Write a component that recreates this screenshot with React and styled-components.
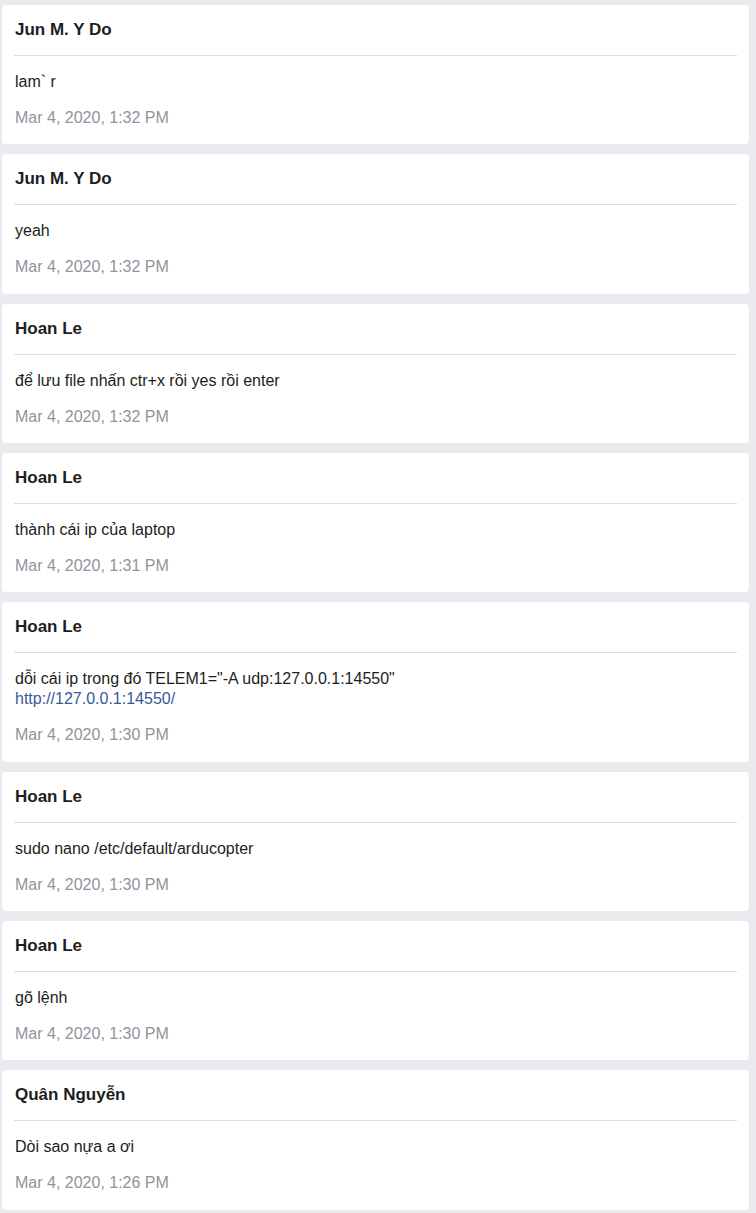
import React from 'react';
import styled, { createGlobalStyle } from 'styled-components';

const GlobalStyle = createGlobalStyle`
    html, body {
        margin: 0;
        padding: 0;
        background: #e9ebee;
        font-family: "Liberation Sans", Arial, sans-serif;
    }
`

const Feed = styled.div`
    display: flex;
    flex-direction: column;
    gap: 10px;
    padding: 5px 7px 10px 2px;
`

const Card = styled.div`
    background: #fff;
    border-radius: 4px;
    padding: 15px 12px 16.33px;
    color: #1c1e21;
`

const Author = styled.div`
    font-size: 17px;
    font-weight: bold;
    line-height: 20px;
    padding-left: 1px;
`

const Divider = styled.hr`
    border: 0;
    border-top: 1px solid #dadde1;
    margin: 15px 0 16px;
`

const Message = styled.div`
    font-size: 16px;
    line-height: 20px;
    padding-left: 1px;

    a {
        color: #385898;
        text-decoration: none;
    }
`

const Time = styled.div`
    margin-top: 16px;
    font-size: 16px;
    line-height: 20px;
    color: #90949c;
    padding-left: 1px;
`

const posts = [
    { author: 'Jun M. Y Do', text: 'lam` r', time: 'Mar 4, 2020, 1:32 PM' },
    { author: 'Jun M. Y Do', text: 'yeah', time: 'Mar 4, 2020, 1:32 PM' },
    { author: 'Hoan Le', text: 'để lưu file nhấn ctr+x rồi yes rồi enter', time: 'Mar 4, 2020, 1:32 PM' },
    { author: 'Hoan Le', text: 'thành cái ip của laptop', time: 'Mar 4, 2020, 1:31 PM' },
    { author: 'Hoan Le', text: 'dỗi cái ip trong đó TELEM1="-A udp:127.0.0.1:14550"', link: 'http://127.0.0.1:14550/', time: 'Mar 4, 2020, 1:30 PM' },
    { author: 'Hoan Le', text: 'sudo nano /etc/default/arducopter', time: 'Mar 4, 2020, 1:30 PM' },
    { author: 'Hoan Le', text: 'gõ lệnh', time: 'Mar 4, 2020, 1:30 PM' },
    { author: 'Quân Nguyễn', text: 'Dòi sao nựa a ơi', time: 'Mar 4, 2020, 1:26 PM' },
]

const App = () => {
    return (
        <>
            <GlobalStyle />
            <Feed>
                {posts.map((p, i) => (
                    <Card key={i}>
                        <Author>{p.author}</Author>
                        <Divider />
                        <Message>
                            {p.text}
                            {p.link && <><br /><a href={p.link}>{p.link}</a></>}
                        </Message>
                        <Time>{p.time}</Time>
                    </Card>
                ))}
            </Feed>
        </>
    )
}

export default App;
